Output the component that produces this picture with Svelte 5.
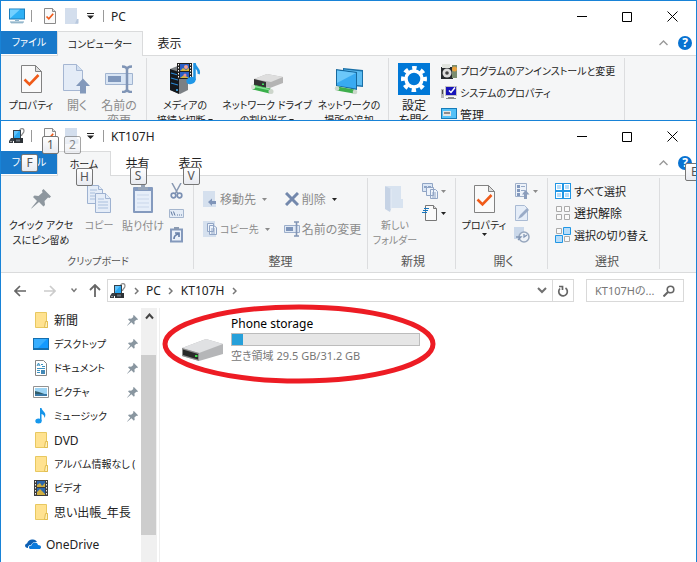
<script>
  const places = [
    { name: '新聞', icon: 'folder', pinned: true },
    { name: 'デスクトップ', icon: 'desktop', pinned: true },
    { name: 'ドキュメント', icon: 'document', pinned: true },
    { name: 'ピクチャ', icon: 'picture', pinned: true },
    { name: 'ミュージック', icon: 'music', pinned: true },
    { name: 'DVD', icon: 'folder' },
    { name: 'アルバム情報なし (', icon: 'folder' },
    { name: 'ビデオ', icon: 'video' },
    { name: '思い出帳_年長', icon: 'folder' }
  ];
  const usedPercent = 6;
  // Katakana labels are set one step smaller, as in a UI font with narrow kana.
  const hasKatakana = (text) => /[ァ-ヶ]/.test(text);
</script>

{#snippet icon(name)}
  {#if name === 'monitor'}
    <svg width="16" height="16" viewBox="0 0 16 16"><path d="M0 .5h16v11H0z" fill="#1b7dbb"/><path d="M1 1.5h14v9H1z" fill="#2eb0f5"/><path d="M1 10.5 11 1.5H1z" fill="#73d0ff"/><path d="M6 12h4v1H6z" fill="#8eb4cc"/><path d="M1 13h14v2H1z" fill="#b9d0de"/><path d="M2 14.5h12v.8H2z" fill="#6f9db9"/></svg>
  {:else if name === 'check-small'}
    <svg width="12" height="16" viewBox="0 0 12 16"><path d="M.5.5h8l3 3v12H.5z" fill="#fafafa" stroke="#8a8a8a"/><path d="M8.5.5v3h3" fill="#ddd" stroke="#8a8a8a"/><path d="m2.5 8.5 2.3 2.3 4.4-5" fill="none" stroke="#ef5a1a" stroke-width="1.7"/></svg>
  {:else if name === 'page-small'}
    <svg width="14" height="16" viewBox="0 0 14 16"><path d="M0 0h12v11h1v5H0z" fill="#d3deed"/><path d="M12 11h1.5v4.5H10z" fill="#b8c8de"/></svg>
  {:else if name === 'device'}
    <svg width="16" height="16" viewBox="0 0 16 16"><path d="M10.500 2.500c1-2.500 4.500-2.500 4.500.500 0 2.500-2.500 2.500-2.500 5" fill="none" stroke="#8a8a8a" stroke-width="1.200"/><path d="M4 2h8v11H4z" fill="#35414b"/><path d="M5 3h6v7H5z" fill="#29a7f1"/><path d="M5 3h5l-5 6z" fill="#5fc2fb"/><path d="M5 10h9v5H5z" fill="#2c3136"/><path d="M7 11.500h4v2H7z" fill="#66717a"/><path d="m0 13 2-3h2v5H0z" fill="#3b4147"/><path d="M1 13h2v1H1z" fill="#999"/></svg>
  {:else if name === 'check-large'}
    <svg width="21" height="28" viewBox="0 0 21 28"><path d="M.5.5h14l6 6v21H.5z" fill="#fafafa" stroke="#828282"/><path d="M14.5.5v6h6z" fill="#dedede" stroke="#828282"/><path d="m3.500 14.500 5 5 9-9.500" fill="none" stroke="#f05b19" stroke-width="2.600"/></svg>
  {:else if name === 'open-large'}
    <svg width="28" height="30" viewBox="0 0 28 30"><path d="M.5.5h13l6 6v20H.5z" fill="#e4ecf7" stroke="#a5b6d2"/><path d="M13.5.5v6h6" fill="#d2dff0" stroke="#a5b6d2"/><path d="m20 14.500 7 7.500h-4v7.500h-6V22h-4z" fill="#8399bb"/></svg>
  {:else if name === 'rename-large'}
    <svg width="28" height="28" viewBox="0 0 28 28"><path d="M.5 8.500h27v11H.5z" fill="#d9e5f4" stroke="#a1b4d0"/><path d="M3 11h13v6H3z" fill="#7f97bc"/><path d="M17 1.500c3 0 5 1 5 3.500V24c0 2-2 3-5 3M27 1.500c-3 0-5 1-5 3.500V24c0 2 2 3 5 3" fill="none" stroke="#8095b6" stroke-width="2.500"/></svg>
  {:else if name === 'media'}
    <svg width="32" height="32" viewBox="0 0 32 32"><path d="m1 6 10-4 8 4v21l-8 4-10-4z" fill="#7b8085"/><path d="m1 6 9 3v22l-9-4z" fill="#14181d"/><path d="m2 10 7 2m-7 3 7 2m-7 3 7 2" stroke="#2a86d2" stroke-width="1.200"/><circle cx="8" cy="27" r="1" fill="#48b7ff"/><path d="M8 0h15v16H8z" fill="#202020"/><path d="M11 1h9v7h-9zm0 8h9v6h-9z" fill="#2b5fc5"/><path d="m11 8 3-3 3 2 3-2v3zm0 7 4-3 5 3z" fill="#d5b53c"/><circle cx="17" cy="4" r="2" fill="#f2a08d"/><circle cx="16" cy="12" r="1.500" fill="#e78aa0"/><path d="M9.500 1v14M21.500 1v14" stroke="#fff" stroke-dasharray="1.500 1.500"/><path d="M25.500 17V0c0 5 6 6 4 11" fill="none" stroke="#1f93e2" stroke-width="2.500"/><ellipse cx="22" cy="17.500" rx="4.800" ry="3.500" transform="rotate(-20 22 17.500)" fill="#2097e7"/></svg>
  {:else if name === 'netdrive'}
    <svg width="32" height="32" viewBox="0 0 32 32"><path d="m3 16 13-5 16 3v6l-13 5L3 21z" fill="#b4b4b4"/><path d="m3 16 13-5 16 3-12 5z" fill="#dedede"/><path d="m3 16 12 3v6L3 22z" fill="#343434"/><path d="M11 20.500h2v1.500h-2z" fill="#40e15c"/><path d="m2 24 17 4" stroke="#39af4a" stroke-width="5"/><path d="m4 23.500 14 3" stroke="#83e291" stroke-width="1.500"/><circle cx="2" cy="24" r="2.300" fill="#dbe4d9"/><circle cx="20" cy="28.500" r="2.500" fill="#ccd5cb"/></svg>
  {:else if name === 'netplace'}
    <svg width="32" height="32" viewBox="0 0 32 32"><path d="m10 5 20 2v17l-20-2z" fill="#1970a8"/><path d="m11 6.500 18 2v14l-18-2z" fill="#5dbdf3"/><path d="m3 6 21 3v18L3 23z" fill="#17699e"/><path d="m4 7.500 19 2.500v15.500l-19-3z" fill="#38aaf2"/><path d="m4 7.500 19 2.500L4 20z" fill="#6cc8fa"/><path d="m4 25.500 17 3" stroke="#3fae4d" stroke-width="4"/><circle cx="4" cy="25.500" r="2.300" fill="#cbd8cb"/><circle cx="22" cy="29" r="2.300" fill="#cbd8cb"/></svg>
  {:else if name === 'gear'}
    <svg width="32" height="32" viewBox="0 0 32 32"><path d="M0 0h32v32H0z" fill="#0078d7"/><g fill="none" stroke="#fff"><circle cx="16" cy="16" r="11" stroke-width="4" stroke-dasharray="4.320 4.320" transform="rotate(-11 16 16)"/><circle cx="16" cy="16" r="8" stroke-width="3.500"/></g></svg>
  {:else if name === 'programs'}
    <svg width="16" height="16" viewBox="0 0 16 16"><path d="M0 4h12v12H0z" fill="#26292c"/><path d="M1 1h8v4H1z" fill="#e1e4df"/><circle cx="6" cy="10" r="4.500" fill="#ddd"/><circle cx="6" cy="10" r="1.800" fill="#444"/><path d="M11 2h5v13h-5z" fill="#7b8d6f"/><circle cx="13.500" cy="6" r="2.500" fill="#e9a13c"/></svg>
  {:else if name === 'system'}
    <svg width="16" height="16" viewBox="0 0 16 16"><path d="M0 4h3v9H0z" fill="#b7b7b7"/><path d="M1 5h1v4H1z" fill="#4b4b4b"/><path d="M4 1h12v10H4z" fill="#c4c4c4"/><path d="M5 2h10v8H5z" fill="#1713b9"/><path d="m8 5.500 2 2 4-5" fill="none" stroke="#fff" stroke-width="1.500"/><path d="M7 12h6v1h2v1H5v-1h2z" fill="#888"/></svg>
  {:else if name === 'manage'}
    <svg width="16" height="16" viewBox="0 0 16 16"><path d="M0 1h16v11H0z" fill="#167cb9"/><path d="M1 2h14v9H1z" fill="#53c1f8"/><path d="M2 4h8v5H2z" fill="#e5e5e5"/><path d="M3 6h6" stroke="#333"/></svg>
  {:else if name === 'pin-large'}
    <svg width="20" height="20" viewBox="0 0 20 20"><path d="m12.500 0 7.500 7.500-1.500 1.500-1.500-.5-3.500 3.500.5 4-1.500 1.500-4.500-4.500L.500 19.500l-.3-.3L6 12 2 8l1.500-1.500 4 .5L11.500 3.500 11 1.500z" fill="#8e979f"/></svg>
  {:else if name === 'copy-large'}
    <svg width="24" height="28" viewBox="0 0 24 28"><g fill="#e5edf8" stroke="#9eb2d1"><path d="M.5.500h11l4 4v14H.500z"/><path d="M8.500 8.500h10l5 5v14h-15z"/><path d="M18.500 8.500v5h5M11.500.500v4h4"/></g><path d="M3 5h7M3 8h5M3 11h5M3 14h5m3 0h6m-6 3h10m-10 3h10m-10 3h10" stroke="#a9bfdd"/></svg>
  {:else if name === 'paste-large'}
    <svg width="20" height="28" viewBox="0 0 20 28"><rect y="2" width="20" height="26" rx="1" fill="#849abe"/><path d="M2 6h16v20H2z" fill="#e6eef9"/><path d="M5 4V2h3V0h4v2h3v3H5z" fill="#97a5b9"/><path d="M4 10h12M4 14h12M4 18h12M4 22h12" stroke="#c9d6ea"/></svg>
  {:else if name === 'cut'}
    <svg width="13" height="16" viewBox="0 0 13 16"><path d="m2 0 6 11M11 0 5 11" stroke="#8797b1" stroke-width="1.500"/><g fill="none" stroke="#7b90b3" stroke-width="1.700"><circle cx="3.500" cy="12.500" r="2.300"/><circle cx="9.500" cy="12.500" r="2.300"/></g></svg>
  {:else if name === 'path'}
    <svg width="15" height="9" viewBox="0 0 15 9"><path d="M.5.500h14v8H.500z" fill="#e4ecf6" stroke="#a5b6ce"/><path d="m2 2.500 1.500 4m1-4 1.500 4M8 6h1m1 0h1m1 0h1" fill="none" stroke="#5f78a0"/></svg>
  {:else if name === 'shortcut'}
    <svg width="13" height="16" viewBox="0 0 13 16"><path d="M1 2.500h11v12H1z" fill="#eaf1fa" stroke="#8499bc" stroke-width="2"/><path d="M4 0h5v3H4z" fill="#8a9ab2"/><path d="M4 12c0-3 1-4 4-5M5 6h4v4" fill="none" stroke="#6780a9" stroke-width="1.700"/></svg>
  {:else if name === 'move'}
    <svg width="14" height="16" viewBox="0 0 14 16"><path d="M0 0h12v11h1v5H0z" fill="#d5e0ee"/><path d="m5 11 4-3.500V10h4v3H9v2z" fill="#8095b9"/></svg>
  {:else if name === 'copyto'}
    <svg width="14" height="16" viewBox="0 0 14 16"><path d="M0 0h12v11h1v5H0z" fill="#d5e0ee"/><path d="M4.500 2.500h6v8h-6zM6.500 4.500h4l3 2v7h-7z" fill="#edf3fb" stroke="#91a5c5"/><path d="M8 8h4m-4 2h4m-4 2h4" stroke="#91a5c5"/></svg>
  {:else if name === 'delete'}
    <svg width="14" height="14" viewBox="0 0 14 14"><path d="m1 1 12 12M13 1 1 13" stroke="#7388ac" stroke-width="3"/></svg>
  {:else if name === 'rename'}
    <svg width="16" height="16" viewBox="0 0 16 16"><path d="M.5 4.500h15v7H.500z" fill="#e0e9f5" stroke="#9caeca"/><path d="M2 6h7v4H2z" fill="#7e95ba"/><path d="M10 1h5M10 15h5M12.500 1v14" stroke="#8195b5" stroke-width="1.600"/></svg>
  {:else if name === 'newfolder'}
    <svg width="20" height="28" viewBox="0 0 20 28"><path d="M1 1h15v13h2v9H4z" fill="#d8e3f0"/><path d="m0 1 6 3v20l-1 3-5-3z" fill="#c6d3e5"/><path d="M6 4v20" fill="none" stroke="#e6edf6"/></svg>
  {:else if name === 'newitem'}
    <svg width="16" height="16" viewBox="0 0 16 16"><path d="M.5.500h10v8H.500z" fill="#dce7f5" stroke="#90a5c5"/><path d="M2 3h3v2H2zm4 0h3v2H6z" fill="#8da4c7"/><path d="M4.500 4.500h7v8h-7zM8.500 6.500h5l2 2v7h-7z" fill="#edf3fb" stroke="#91a5c5"/><path d="M10 10h4m-4 2h4m-4 2h4" stroke="#91a5c5"/></svg>
  {:else if name === 'easy'}
    <svg width="16" height="16" viewBox="0 0 16 16"><path d="M3.500.500h8l3 3v12h-11z" fill="#fafafa" stroke="#777"/><path d="M11.500.500v3h3" fill="#ddd" stroke="#777"/><path d="M2 3.500h5M1 5.500h5M0 7.500h5" stroke="#1476c0"/></svg>
  {:else if name === 'open'}
    <svg width="15" height="16" viewBox="0 0 15 16"><path d="M.5.500h11v13H.500z" fill="#edf2f9" stroke="#9eafc9"/><path d="M2 2h3v3H2zm0 4h3v3H2zm0 4h3v3H2z" fill="#8198bd"/><path d="M6 3.500h4M6 7.500h4" stroke="#95a9c7"/><path d="m10.500 7 4 4.500H12V16H9v-4.500H7z" fill="#8b9dbb"/></svg>
  {:else if name === 'edit'}
    <svg width="15" height="16" viewBox="0 0 15 16"><path d="M.5.500h9l3 3v12H.500z" fill="#e5edf8" stroke="#a9bad3"/><path d="m3 14 2-4 7-7 2 2-7 7z" fill="#99abc7"/></svg>
  {:else if name === 'history'}
    <svg width="16" height="16" viewBox="0 0 16 16"><path d="M0 0h10v12H0z" fill="#cad8ea"/><circle cx="10" cy="10" r="5" fill="#eef2f7" stroke="#96a6bd" stroke-width="1.500"/><path d="M10 7v3l3-2M2 10h5l-3 3" fill="none" stroke="#8195b4" stroke-width="1.300"/></svg>
  {:else if name === 'select-all'}
    <svg width="16" height="16" viewBox="0 0 16 16"><path d="M0 0h16v16H0z" fill="#2196e4"/><path d="M1 1h6v6H1zm8 0h6v6H9zM1 9h6v6H1zm8 0h6v6H9z" fill="#fff"/><path d="M2 2h4v4H2zm8 0h4v4h-4zM2 10h4v4H2zm8 0h4v4h-4z" fill="#b6ddfa"/></svg>
  {:else if name === 'select-none'}
    <svg width="16" height="16" viewBox="0 0 16 16"><path d="M1.500 1.500h5v5h-5zm8 0h5v5h-5zm-8 8h5v5h-5zm8 0h5v5h-5z" fill="#fafafa" stroke="#aaa"/></svg>
  {:else if name === 'select-invert'}
    <svg width="16" height="16" viewBox="0 0 16 16"><path d="M1.500 1.500h5v5h-5zm8 8h5v5h-5z" fill="#fafafa" stroke="#aaa"/><path d="M8.500.500h7v7h-7zm-8 8h7v7h-7z" fill="#b6ddfa" stroke="#2196e4"/></svg>
  {:else if name === 'folder'}
    <svg width="16" height="16" viewBox="0 0 16 16"><path d="M2.500.500h11v9h1v6h-12z" fill="#ffe290" stroke="#e8c860"/><path d="M12.500 9.500h2v6h-3z" fill="#fff0b8" stroke="#e2bd50"/></svg>
  {:else if name === 'desktop'}
    <svg width="16" height="16" viewBox="0 0 16 16"><path d="M0 2h16v12H0z" fill="#146eae"/><path d="M1 3h14v9H1z" fill="#139aff"/><path d="M1 3h13L5 12H1z" fill="#37aeff"/></svg>
  {:else if name === 'document'}
    <svg width="16" height="16" viewBox="0 0 16 16"><path d="M2.500.500h8l3 3v12h-11z" fill="#fff" stroke="#858585"/><path d="m4 6 1.500-3L7 6M4.500 5h2M8 4.500h2M9 6.500h3M4 8.500h8M4 10.500h3m-3 2h3" fill="none" stroke="#3c91c0"/><path d="M8 10h4v4H8z" fill="#4389b7"/></svg>
  {:else if name === 'picture'}
    <svg width="16" height="16" viewBox="0 0 16 16"><path d="M.5 2.500h15v11H.500z" fill="#fff" stroke="#929292"/><path d="M2 4h12v8H2z" fill="#9dd4f4"/><path d="m2 7 4 1 8 3v1H2z" fill="#315d6b"/><path d="M2 10h12v2H2z" fill="#3978a6"/></svg>
  {:else if name === 'music'}
    <svg width="16" height="16" viewBox="0 0 16 16"><path d="M7 13V0h1.500c.5 3.500 6 4.500 3 10-.2-2.500-1-3.500-3-4v7z" fill="#1694e8"/><ellipse cx="5.500" cy="13" rx="3.200" ry="2.500" fill="#1698ed"/></svg>
  {:else if name === 'video'}
    <svg width="16" height="16" viewBox="0 0 16 16"><path d="M1 0h14v16H1z" fill="#3c3c3c"/><path d="M4 1h8v6H4zm0 7h8v7H4z" fill="#2c67ad"/><path d="m4 5 3-2 2 3 3-3v4H4zm0 7 3-3 5 5v1H4z" fill="#d0ae3f"/><path d="M2.500 1v14M13.500 1v14" stroke="#eee" stroke-dasharray="1.500 1.500"/></svg>
  {:else if name === 'pin'}
    <svg width="11" height="11" viewBox="0 0 20 20"><path d="m12.500 0 7.500 7.500-1.500 1.500-1.500-.5-3.500 3.500.5 4-1.500 1.500-4.500-4.500L.500 19.500l-.3-.3L6 12 2 8l1.500-1.500 4 .5L11.500 3.500 11 1.500z" fill="#8996a0"/></svg>
  {:else if name === 'cloud'}
    <svg width="16" height="10" viewBox="0 0 16 10"><path d="M3 9C-1 9-.5 5 2 4.500 3 1 6 0 8 .500c2 0 3 1 4 2.500-4-.5-5 1-6 3-3 0-3 2-3 3z" fill="#0c5fb3"/><path d="M5 10c-2-1-1-4 1.500-3.500C7 3 12 2.500 13 6c3 0 4 2.500 2 4z" fill="#0a7adc"/></svg>
  {:else if name === 'drive'}
    <svg width="44" height="24" viewBox="0 0 44 24"><path d="m1 10 24-9 17 5v10l-24 7L1 18z" fill="#b5b6b8"/><path d="m1 10 24-9 17 5-24 9z" fill="#e0e1e3"/><path d="m1 10 17 5v8L1 18z" fill="#8b8b8b"/><path d="m2 11.500 15 4.500v5.500L2 17z" fill="#292929"/><path d="M14 17h2.500v2H14z" fill="#3bdc49"/></svg>
  {:else if name === 'back' || name === 'forward'}
    <svg width="12" height="12" viewBox="0 0 12 12"><path d={name === 'back' ? 'M12 6H1m5-5L1 6l5 5' : 'M0 6h11M6 1l5 5-5 5'} fill="none" stroke={name === 'back' ? '#666' : '#ccc'} stroke-width="1.700"/></svg>
  {:else if name === 'up'}
    <svg width="12" height="13" viewBox="0 0 12 13"><path d="M6 13V1M1 6l5-5 5 5" fill="none" stroke="#666" stroke-width="1.800"/></svg>
  {:else if name === 'down'}
    <svg width="10" height="7" viewBox="0 0 10 7"><path d="m1 1 4 4 4-4" fill="none" stroke="#707070" stroke-width="2"/></svg>
  {:else if name === 'down-small'}
    <svg width="6" height="5" viewBox="0 0 6 5"><path d="m.5.500 2.500 3 2.500-3" fill="none" stroke="#777" stroke-width="1.400"/></svg>
  {:else if name === 'next'}
    <svg width="5" height="8" viewBox="0 0 5 8"><path d="m1 1 3 3-3 3" fill="none" stroke="#777" stroke-width="1.500"/></svg>
  {:else if name === 'refresh'}
    <svg width="12" height="12" viewBox="0 0 12 12"><path d="M8.500 3A4.300 4.300 0 1 1 3 3.500M2 1.500h3.500V5" fill="none" stroke="#666" stroke-width="1.700"/></svg>
  {:else if name === 'search'}
    <svg width="12" height="12" viewBox="0 0 12 12"><circle cx="7.500" cy="4.500" r="3.300" fill="none" stroke="#666" stroke-width="1.600"/><path d="m5 7-4.500 4.500" stroke="#666" stroke-width="2"/></svg>
  {:else if name === 'caret'}
    <svg width="5" height="3" viewBox="0 0 5 3"><path d="M0 0h5L2.500 3z" fill="currentColor"/></svg>
  {:else if name === 'quick'}
    <svg width="7" height="6" viewBox="0 0 7 6"><path d="M0 0h7v1H0zm0 2.500h7L3.500 6z" fill="#222"/></svg>
  {:else if name === 'collapse'}
    <svg width="9" height="6" viewBox="0 0 9 6"><path d="m.5 5 4-4 4 4" fill="none" stroke="#999" stroke-width="1.400"/></svg>
  {:else if name === 'scroll-up'}
    <svg width="9" height="7" viewBox="0 0 9 7"><path d="m1 5.500 3.500-4 3.500 4" fill="none" stroke="#444" stroke-width="2"/></svg>
  {:else if name === 'min'}
    <svg width="10" height="11" viewBox="0 0 10 11"><path d="M0 5h10v1H0z"/></svg>
  {:else if name === 'max'}
    <svg width="10" height="11" viewBox="0 0 10 11"><path d="M.5 1.500h9v9h-9z" fill="none" stroke="#000"/></svg>
  {:else if name === 'close'}
    <svg width="11" height="11" viewBox="0 0 11 11"><path d="m.5.500 10 10m0-10-10 10" stroke="#000"/></svg>
  {/if}
{/snippet}

{#snippet titlebar(title, appIcon, tips)}
  <header class="titlebar">
    <span class="app">{@render icon(appIcon)}</span>
    <i class="sep"></i>
    <button class="qa" aria-label="プロパティ">{@render icon('check-small')}{#if tips}<kbd class="tip quick-tip">1</kbd>{/if}</button>
    <button class="qa" aria-label="新しいフォルダー">{@render icon('page-small')}{#if tips}<kbd class="tip quick-tip faded">2</kbd>{/if}</button>
    <button class="qa narrow" aria-label="クイック アクセス">{@render icon('quick')}</button>
    <i class="sep"></i>
    <h1>{title}</h1>
    <button class="caption" aria-label="最小化">{@render icon('min')}</button>
    <button class="caption" aria-label="最大化">{@render icon('max')}</button>
    <button class="caption" aria-label="閉じる">{@render icon('close')}</button>
  </header>
{/snippet}

{#snippet tabEnd(tips)}
  <span class="tab-end">
    <button aria-label="リボンの最小化">{@render icon('collapse')}</button>
    <button class="help" aria-label="ヘルプ">?{#if tips}<kbd class="tip help-tip">E</kbd>{/if}</button>
  </span>
{/snippet}

{#snippet big(iconName, lines, cls, arrow)}
  <button class="big {cls}">
    <span class="big-icon">{@render icon(iconName)}</span>
    {#each lines as line, i}
      <span class="line" class:kana={hasKatakana(lines.join(''))}>{line}{#if arrow === 'inline' && i === lines.length - 1}&nbsp;{@render icon('caret')}{/if}</span>
    {/each}
    {#if arrow === 'below'}{@render icon('caret')}{/if}
  </button>
{/snippet}

{#snippet small(iconName, label, cls, arrow)}
  <button class="small {cls}"><span class="small-icon">{@render icon(iconName)}</span>{#if label}<span class:kana={hasKatakana(label)}>{label}</span>{/if}{#if arrow}<span class="arrow">{@render icon('caret')}</span>{/if}</button>
{/snippet}

<div class="desktop">
  <section class="window rear" aria-label="PC">
    {@render titlebar('PC', 'monitor', false)}
    <nav class="tabs">
      <button class="file kana">ファイル</button>
      <button class="tab active kana computer">コンピューター</button>
      <button class="tab">表示</button>
      {@render tabEnd(false)}
    </nav>
    <div class="ribbon">
      <div class="group location">
        {@render big('check-large', ['プロパティ'], 'w56', '')}
        {@render big('open-large', ['開く'], 'w36 off', '')}
        {@render big('rename-large', ['名前の', '変更'], 'w48 off', '')}
      </div>
      <div class="group network">
        {@render big('media', ['メディアの', '接続と切断'], 'w72', 'inline')}
        {@render big('netdrive', ['ネットワーク ドライブ', 'の割り当て'], 'w92', 'inline')}
        {@render big('netplace', ['ネットワークの', '場所の追加'], 'w72', '')}
      </div>
      <div class="group settings">
        {@render big('gear', ['設定', 'を開く'], 'w44', '')}
        <div class="stack">
          {@render small('programs', 'プログラムのアンインストールと変更', '', false)}
          {@render small('system', 'システムのプロパティ', '', false)}
          {@render small('manage', '管理', '', false)}
        </div>
      </div>
    </div>
  </section>

  <section class="window front" aria-label="KT107H">
    {@render titlebar('KT107H', 'device', true)}
    <nav class="tabs">
      <button class="file kana">ファイル<kbd class="tip file-tip">F</kbd></button>
      <button class="tab active home kana">ホーム<kbd class="tip">H</kbd></button>
      <button class="tab">共有<kbd class="tip">S</kbd></button>
      <button class="tab">表示<kbd class="tip">V</kbd></button>
      {@render tabEnd(true)}
    </nav>
    <div class="ribbon full">
      <div class="group clipboard">
        <div class="row">
          {@render big('pin-large', ['クイック アクセ', 'スにピン留め'], 'w76', '')}
          {@render big('copy-large', ['コピー'], 'w40 off', '')}
          {@render big('paste-large', ['貼り付け'], 'w48 off mid', '')}
          <div class="stack">
            {@render small('cut', '', 'off', false)}
            {@render small('path', '', 'off', false)}
            {@render small('shortcut', '', 'off', false)}
          </div>
        </div>
        <p class="kana">クリップボード</p>
      </div>
      <div class="group organize">
        <div class="row">
          <div class="stack roomy">
            {@render small('move', '移動先', 'off', true)}
            {@render small('copyto', 'コピー先', 'off', true)}
          </div>
          <i class="inner"></i>
          <div class="stack roomy">
            {@render small('delete', '削除', 'off dark-arrow', true)}
            {@render small('rename', '名前の変更', 'off', false)}
          </div>
        </div>
        <p>整理</p>
      </div>
      <div class="group new">
        <div class="row">
          {@render big('newfolder', ['新しい', 'フォルダー'], 'w48 off', '')}
          <div class="stack">
            {@render small('newitem', '', 'off', true)}
            {@render small('easy', '', 'off dark-arrow', true)}
          </div>
        </div>
        <p>新規</p>
      </div>
      <div class="group open">
        <div class="row">
          {@render big('check-large', ['プロパティ'], 'w48', 'below')}
          <div class="stack">
            {@render small('open', '', 'off', true)}
            {@render small('edit', '', 'off', false)}
            {@render small('history', '', 'off', false)}
          </div>
        </div>
        <p>開く</p>
      </div>
      <div class="group select">
        <div class="stack">
          {@render small('select-all', 'すべて選択', 'mid', false)}
          {@render small('select-none', '選択解除', '', false)}
          {@render small('select-invert', '選択の切り替え', 'mid', false)}
        </div>
        <p>選択</p>
      </div>
    </div>

    <div class="navigation">
      <button aria-label="戻る">{@render icon('back')}</button>
      <button aria-label="進む">{@render icon('forward')}</button>
      <button class="recent" aria-label="最近表示した場所">{@render icon('down-small')}</button>
      <button class="parent" aria-label="上へ">{@render icon('up')}</button>
      <div class="address">
        {@render icon('device')}
        <span class="chev">{@render icon('next')}</span>
        <a href="#pc">PC</a>
        <span class="chev">{@render icon('next')}</span>
        <a href="#device">KT107H</a>
        <span class="chev">{@render icon('next')}</span>
        <button class="history" aria-label="以前の場所">{@render icon('down')}</button>
        <button class="refresh" aria-label="最新の情報に更新">{@render icon('refresh')}</button>
      </div>
      <label class="search"><input type="text" aria-label="検索" placeholder="KT107Hの..." />{@render icon('search')}</label>
    </div>

    <div class="body">
      <nav class="places">
        <ul>
          {#each places as place}
            <li><a href="#place">{@render icon(place.icon)}<span class:kana={hasKatakana(place.name)}>{place.name}</span>{#if place.pinned}{@render icon('pin')}{/if}</a></li>
          {/each}
          <li class="onedrive"><a href="#onedrive">{@render icon('cloud')}<span>OneDrive</span></a></li>
        </ul>
      </nav>
      <div class="scroll"><button aria-label="上へスクロール">{@render icon('scroll-up')}</button><i></i></div>
      <main>
        <a class="storage" href="#storage">
          <span class="drive">{@render icon('drive')}</span>
          <span class="details">
            <span class="name">Phone storage</span>
            <span class="meter"><i style="width: {usedPercent}%"></i></span>
            <span class="free">空き領域 29.5 GB/31.2 GB</span>
          </span>
          <svg class="ring" viewBox="0 0 276 82" aria-hidden="true"><ellipse cx="138" cy="41" rx="134" ry="37" fill="none" stroke="#ed1c24" stroke-width="5"/></svg>
        </a>
      </main>
    </div>
  </section>
</div>

<style>
  :global(body) { margin: 0; }
  .desktop, .desktop * { box-sizing: border-box; }
  .desktop {
    height: 100vh;
    display: flex;
    flex-direction: column;
    overflow: hidden;
    color: #222;
    font: 12px/15px "Noto Sans", "Noto Sans CJK JP", sans-serif;
    font-feature-settings: "palt";
  }
  svg { display: block; flex: none; }
  button {
    border: 0;
    padding: 0;
    background: none;
    color: inherit;
    font: inherit;
    font-feature-settings: inherit;
    white-space: nowrap;
  }
  a { color: inherit; text-decoration: none; }
  h1, p, ul { margin: 0; padding: 0; font: inherit; list-style: none; }
  .window {
    border: 1px solid #1883d7;
    border-bottom: 0;
    background: #fff;
    display: flex;
    flex-direction: column;
    overflow: hidden;
  }
  .rear { flex: 0 0 120px; }
  .front { flex: 1; min-height: 0; }

  .titlebar { flex: none; height: 30px; display: flex; align-items: center; padding-left: 8px; }
  .app { width: 16px; }
  .sep { width: 1px; height: 12px; background: #999; margin: 0 7px 0 6px; }
  .qa { position: relative; width: 22px; height: 24px; display: grid; place-items: center; }
  .narrow { width: 14px; }
  h1 { flex: 1; }
  .caption { width: 45px; height: 28px; display: grid; place-items: center; }
  .caption:last-child { width: 47px; }

  .tabs { flex: none; height: 25px; display: flex; border-bottom: 1px solid #dadbdc; }
  .file { position: relative; width: 56px; background: #1979ca; color: #fff; height: 23px; }
  .tab { position: relative; width: 53px; height: 24px; }
  .active { height: 25px; background: #f5f6f7; border: 1px solid #dadbdc; border-bottom: 0; }
  .computer { width: 86px; }
  .home { width: 54px; }
  .mid { font-size: 11px; }
  .kana { font-size: 10px; }
  .tab-end { margin-left: auto; display: flex; align-items: center; gap: 10px; padding-right: 4px; }
  .help { position: relative; width: 14px; height: 14px; border-radius: 50%; background: #0872d1; color: #fff; font-weight: 700; line-height: 14px; }

  .tip {
    position: absolute;
    z-index: 2;
    left: calc(50% - 8px);
    top: 16px;
    width: 17px;
    height: 18px;
    border: 1px solid #767676;
    border-radius: 2px;
    background: linear-gradient(#fff, #e8eaf0);
    color: #555;
    font: 12px/16px "Noto Sans", sans-serif;
    text-align: center;
  }
  .file-tip { top: 3px; }
  .quick-tip { top: 12px; }
  .faded { opacity: .65; }
  .help-tip { left: 7px; top: 7px; text-align: left; padding-left: 5px; }

  .ribbon { flex: none; display: flex; height: 96px; padding-top: 2px; background: #f5f6f7; }
  .full { height: 97px; border-bottom: 1px solid #dadbdc; }
  .group { position: relative; display: flex; height: 91px; border-right: 1px solid #dcdddf; padding-top: 5px; }
  .full .group { flex-direction: column; }
  .row { display: flex; height: 71px; }
  .group p { text-align: center; color: #555; }
  .location { width: 146px; padding-left: 2px; }
  .network { width: 242px; padding-left: 2px; }
  .settings { width: 236px; padding-left: 3px; }
  .clipboard { width: 193px; padding-left: 2px; }
  .organize { width: 174px; }
  .new { width: 88px; padding-left: 3px; }
  .open { width: 92px; padding-left: 4px; }
  .select { width: 112px; padding-left: 7px; }
  .big { display: flex; flex-direction: column; align-items: center; height: 70px; }
  .big-icon { height: 32px; margin-bottom: 3px; display: grid; place-items: center; }
  .line { display: flex; align-items: center; }
  .w36 { width: 36px; }
  .w40 { width: 40px; }
  .w44 { width: 44px; }
  .w48 { width: 48px; }
  .w56 { width: 56px; }
  .w72 { width: 72px; }
  .w76 { width: 76px; }
  .w92 { width: 92px; }
  .off { color: #8b8b8b; }
  .stack { display: flex; flex-direction: column; margin-top: -3px; height: 71px; }
  .full .select .stack { height: 74px; }
  .small { height: 22px; display: flex; align-items: center; gap: 3px; }
  .small-icon { width: 16px; display: grid; place-items: center; }
  .clipboard .stack { padding-left: 1px; }
  .settings .stack { padding-left: 5px; }
  .row .roomy { gap: 8px; padding: 8px 6px 0 8px; }
  .roomy .small { gap: 2px; }
  .roomy .arrow { padding-left: 4px; }
  .dark-arrow .arrow { color: #222; }
  .inner { width: 1px; height: 55px; background: #dcdddf; margin-top: 4px; }
  .new .stack { padding-left: 3px; }
  .open .stack { padding-left: 6px; }

  .navigation { flex: none; height: 35px; display: flex; align-items: center; padding: 0 12px 0 4px; }
  .navigation > button { width: 30px; height: 22px; display: grid; place-items: center; }
  .navigation > .recent { width: 18px; }
  .navigation > .parent { width: 24px; }
  .address { flex: 1; height: 23px; border: 1px solid #d9d9d9; display: flex; align-items: center; padding-left: 2px; }
  .chev { width: 20px; display: grid; place-items: center; }
  .history { width: 20px; height: 21px; margin-left: auto; display: grid; place-items: center; }
  .refresh { width: 21px; height: 21px; border-left: 1px solid #d9d9d9; display: grid; place-items: center; }
  .search { width: 98px; height: 23px; margin-left: 12px; border: 1px solid #d9d9d9; display: flex; align-items: center; padding: 0 8px; }
  .search input { min-width: 0; flex: 1; border: 0; padding: 0; outline: 0; background: none; font: inherit; font-size: 11px; font-feature-settings: inherit; }
  .search input::placeholder { color: #777; opacity: 1; }

  .body { flex: 1; min-height: 0; display: flex; }
  .places { width: 140px; overflow: hidden; }
  .places li { height: 24px; }
  .places a { height: 24px; display: flex; align-items: center; gap: 5px; padding: 0 3px 0 32px; white-space: nowrap; }
  .places span { flex: 1; }
  .places .onedrive { margin-top: 8px; }
  .places .onedrive a { padding-left: 24px; }
  .scroll { width: 16px; background: #f0f0f0; display: flex; flex-direction: column; }
  .scroll button { height: 17px; display: grid; place-items: center; }
  .scroll i { height: 180px; margin: 30px 1px 0 0; background: #cdcdcd; }
  main { flex: 1; margin-left: 2px; border-left: 1px solid #eee; padding: 8px 0 0 21px; }
  .storage { position: relative; display: flex; width: 239px; gap: 6px; }
  .drive { padding-top: 22px; }
  .details { flex: 1; }
  .name, .meter, .free { display: block; }
  .name { color: #000; height: 17px; }
  .meter { height: 13px; border: 1px solid #bcbcbc; background: #e6e6e6; }
  .meter i { display: block; height: 11px; background: #26a0da; }
  .free { color: #777; padding-top: 2px; font-size: 11px; }
  .ring { position: absolute; left: -20px; top: -13px; width: 276px; height: 82px; pointer-events: none; }
</style>
